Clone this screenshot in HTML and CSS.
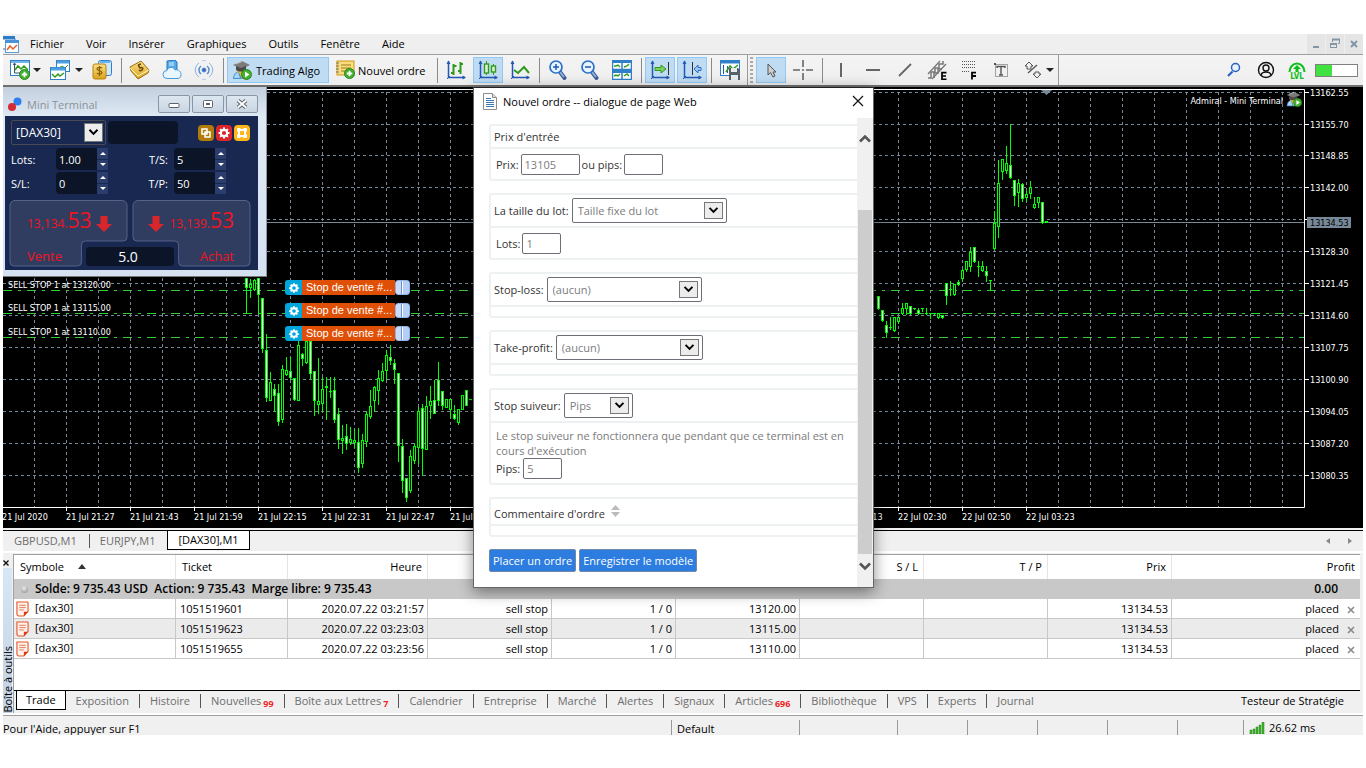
FILE: index.html
```html
<!DOCTYPE html>
<html lang="fr">
<head>
<meta charset="utf-8">
<title>Terminal de trading</title>
<link rel="stylesheet" href="styles.css">
</head>
<body>
<svg class="defs" aria-hidden="true">
  <defs>
    <linearGradient id="gold" x1="0" y1="0" x2="0" y2="1"><stop offset="0" stop-color="#fbe08a"/><stop offset="1" stop-color="#d9a21c"/></linearGradient>
    <symbol id="i-plus" viewBox="0 0 12 12"><circle cx="6" cy="6" r="5.5" fill="#3fae2c" stroke="#23831a"/><path d="M6 3v6M3 6h6" stroke="#fff" stroke-width="2"/></symbol>
    <symbol id="i-algo" viewBox="0 0 20 20">
      <path d="M1 19c0-5 3-8 8-8s7 3 7 8z" fill="#4493d8"/><path d="M2 18c0-3 2-5 4-6l2 6z" fill="#a9d4f5"/><circle cx="9" cy="9" r="4.500" fill="#d9a648"/><path d="M7 12l3 7 3-7z" fill="#e9bb3a"/>
      <path d="M1 5l9-4 8 4-8 4z" fill="#7b7b7b"/><path d="M4 6v4c3 2 7 2 10 0V6l-5 2z" fill="#4a4a4a"/><path d="M4 4l6-2.500" stroke="#c4c4c4"/>
      <circle cx="14.500" cy="14.500" r="5" fill="#44b02f" stroke="#2b861c"/><path d="M13 11.500v6l4.500-3z" fill="#fff"/>
    </symbol>
    <symbol id="i-axes" viewBox="0 0 20 20"><path d="M2.500 1v16.500H19" fill="none" stroke="#2257b5" stroke-width="1.500"/><path d="M.5 4l2-3.500 2 3.500zM16.500 15.500l3.500 2-3.500 2z" fill="#2257b5"/><path d="M1 19l3-3" stroke="#2257b5"/></symbol>
    <symbol id="i-lens" viewBox="0 0 20 20"><path d="M12 12l4.500 6" stroke="#3c5f95" stroke-width="4" stroke-linecap="round"/><path d="M12 12l4 5" stroke="#8fb1dc" stroke-width="2"/><circle cx="8" cy="7" r="6" fill="#e6f4ff" stroke="#2c6fc9" stroke-width="1.700"/></symbol>
    <symbol id="i-chev" viewBox="0 0 19 17"><path d="M5 5.500l4.500 4.500L14 5.500" fill="none" stroke="#000" stroke-width="2.200"/></symbol>
    <symbol id="i-gear" viewBox="0 0 16 16"><circle cx="8" cy="8" r="3.200" fill="none" stroke="#fff" stroke-width="2.200"/><path d="M8 2.500v2M8 11.500v2M2.500 8h2M11.500 8h2M4.100 4.100l1.500 1.500M10.400 10.400l1.500 1.500M4.100 11.900l1.500-1.500M10.400 5.600l1.500-1.500" stroke="#fff" stroke-width="2"/></symbol>
    <symbol id="i-doc" viewBox="0 0 14 16"><path d="M1 .5h11a1 1 0 011 1v9l-4.500 5H3a2 2 0 01-2-2z" fill="#fff2ec" stroke="#e3562c" stroke-width="1.200"/><path d="M8.500 15.500V11H13z" fill="#d93a10"/><path d="M3.500 4h7M3.500 6.500h7M3.500 9h5" stroke="#e3764f"/></symbol>
    <symbol id="i-fall" viewBox="0 0 16 16"><path d="M4.500 0h7v8H16l-8 8-8-8h4.500z" fill="#d9252c"/></symbol>
  </defs>
</svg>

<div class="app">
  <header class="menubar">
    <svg class="app-icon" width="17" height="18" viewBox="0 0 17 18"><rect x="-1" y="1" width="13" height="4" fill="#2d7cc9"/><rect x="-1" y="4" width="13" height="10" fill="#fff" stroke="#2d7cc9"/><rect x="2.500" y="5.500" width="13" height="12" fill="#fff" stroke="#5b9bd8"/><rect x="2" y="5" width="14" height="3" fill="#4a92d8"/><path d="M4 15l3-4 3 3 4-4" stroke="#e2602e" stroke-width="1.500" fill="none"/></svg>
    <nav class="menus">
      <button>Fichier</button><button>Voir</button><button>Insérer</button><button>Graphiques</button><button>Outils</button><button>Fenêtre</button><button>Aide</button>
    </nav>
    <div class="mdi">
      <button aria-label="Réduire"><svg width="12" height="12"><path d="M3 9h6" stroke="#8296a8" stroke-width="2"/></svg></button>
      <button aria-label="Restaurer"><svg width="12" height="12"><path d="M3.500 4V1.500h7v4H9" fill="none" stroke="#8296a8"/><path d="M3 1.500h8M1 6h7" stroke="#8296a8" stroke-width="2"/><rect x="1.500" y="5.500" width="6" height="4" fill="none" stroke="#8296a8"/></svg></button>
      <button aria-label="Fermer"><svg width="12" height="12"><path d="M3 3l6 6M9 3l-6 6" stroke="#8296a8" stroke-width="2"/></svg></button>
    </div>
  </header>

  <div class="toolbar">
    <button class="tool drop" aria-label="Nouveau graphique"><svg width="20" height="20" viewBox="0 0 20 20"><rect x=".5" y=".5" width="19" height="15" fill="#fff" stroke="#2f80c8"/><path d="M1 2h18" stroke="#6fb4ea" stroke-width="2"/><path d="M4.500 4v9H17M3 5l1.500-2L6 5" fill="none" stroke="#35526e"/><path d="M5 10l3-4 3 3 3-3 4 4" fill="none" stroke="#2f9a1c" stroke-width="1.500"/><use href="#i-plus" x="9" y="9" width="11" height="11"/></svg><i class="caret"></i></button>
    <button class="tool drop wide" aria-label="Profils"><svg width="20" height="20" viewBox="0 0 20 20"><rect x="6.500" y=".5" width="13" height="11" fill="#fff" stroke="#2f80c8"/><path d="M7 2h12" stroke="#4b9fe2" stroke-width="3"/><path d="M9 8l3-2 3 2 3-3" fill="none" stroke="#2f9a1c"/><rect x=".5" y="7.500" width="15" height="12" fill="#fff" stroke="#2f80c8"/><path d="M1 9h14" stroke="#4b9fe2" stroke-width="3"/><path d="M2 14l3 3 3-3 2 2 4-3" fill="none" stroke="#2f9a1c" stroke-width="1.500"/></svg><i class="caret"></i></button>
    <button class="tool" aria-label="Symboles"><svg width="20" height="20" viewBox="0 0 20 20"><rect x="6.500" y=".5" width="13" height="15" rx="2" fill="#cfe8fb" stroke="#2f80c8"/><path d="M8 2h10" stroke="#6ab3ec" stroke-width="2"/><rect x="1" y="4" width="13" height="15" rx="2" fill="url(#gold)" stroke="#b9820f"/><path d="M10 8c-1-1-5-1-5 1s5 1.500 5 3.500-4 2-5 .5M7.500 6v10" fill="none" stroke="#8d5f06" stroke-width="1.300"/></svg></button>
    <i class="sep"></i>
    <button class="tool" aria-label="Marché"><svg width="22" height="20" viewBox="0 0 22 20"><path d="M1 7l11-6 8 9-1 3-10 6-7-8z" fill="url(#gold)" stroke="#9b6f10"/><path d="M1 8l8 8 11-6" fill="none" stroke="#fff3c4"/><path d="M9 5l3-1M9 5l2 3c2-1 4 0 2 2-1 1-2 1-3 0" fill="none" stroke="#6b4a08" stroke-width="1.500"/></svg></button>
    <button class="tool" aria-label="Cloud"><svg width="20" height="20" viewBox="0 0 20 20"><path d="M5 1l8-1 2 2v11H5z" fill="#56a9e6" stroke="#2675bd"/><path d="M7 3h5M7 5h5" stroke="#d8efff"/><path d="M5 18.500a4 4 0 010-8c1-4 7-4 8-.5 4-1 6 2 6 4.500s-1 4-4 4z" fill="#e8f6ff" stroke="#4a9add"/></svg></button>
    <button class="tool" aria-label="Signaux"><svg width="20" height="20" viewBox="0 0 20 20" fill="none" stroke="#5b8fd0"><circle cx="10" cy="10" r="2" fill="#2c66c4"/><path d="M7 6a5 5 0 000 8M13 6a5 5 0 010 8" stroke-width="1.500"/><path d="M5 3a8.500 8.500 0 000 14M15 3a8.500 8.500 0 010 14" stroke="#8db3e2"/><path d="M8 .7a9.500 9.500 0 014 0M8 19.300a9.500 9.500 0 004 0" stroke="#b6cdec"/></svg></button>
    <i class="sep"></i>
    <button class="tool text on algo"><svg width="20" height="20"><use href="#i-algo"/></svg>Trading Algo</button>
    <button class="tool text order"><svg width="20" height="20" viewBox="0 0 20 20"><rect x="2" y="1" width="17" height="14" fill="#fbdc7a" stroke="#c9981e"/><path d="M1 3h3M1 6h3M1 9h3M1 12h3" stroke="#777"/><path d="M6 5h10M6 8h10M6 11h6" stroke="#9c7a23"/><use href="#i-plus" x="9" y="8" width="11" height="11"/></svg>Nouvel ordre</button>
    <i class="sep"></i>
    <button class="tool" aria-label="Barres"><svg width="20" height="20" viewBox="0 0 20 20"><use href="#i-axes"/><path d="M7.500 4v11M5 13h2M7.500 6h3M14.500 2v12M12 11h2M14.500 4H17" fill="none" stroke="#2f9a1c" stroke-width="2"/></svg></button>
    <button class="tool on" aria-label="Chandeliers"><svg width="20" height="20" viewBox="0 0 20 20"><use href="#i-axes"/><path d="M8.500 1v3M8.500 13v2M15.500 4v2M15.500 12v3" stroke="#2f9a1c"/><rect x="6.500" y="4" width="4" height="9" fill="#dff2d8" stroke="#2f9a1c" stroke-width="1.400"/><rect x="13.500" y="6" width="4" height="6" fill="#dff2d8" stroke="#2f9a1c" stroke-width="1.400"/></svg></button>
    <button class="tool" aria-label="Ligne"><svg width="20" height="20" viewBox="0 0 20 20"><use href="#i-axes"/><path d="M4 10l4 3 6-6 5 6" fill="none" stroke="#2f9a1c" stroke-width="2"/></svg></button>
    <i class="sep"></i>
    <button class="tool" aria-label="Zoom avant"><svg width="20" height="20" viewBox="0 0 20 20"><use href="#i-lens"/><path d="M8 4v6M5 7h6" stroke="#2257b5" stroke-width="1.500"/></svg></button>
    <button class="tool" aria-label="Zoom arrière"><svg width="20" height="20" viewBox="0 0 20 20"><use href="#i-lens"/><path d="M5 7h6" stroke="#2257b5" stroke-width="1.500"/></svg></button>
    <button class="tool" aria-label="Mosaïque"><svg width="20" height="20" viewBox="0 0 20 20"><path d="M.5.500h19v19H.5z" fill="#fff" stroke="#2f80c8"/><path d="M0 1.500h20M0 11.500h20" stroke="#2f80c8" stroke-width="3"/><path d="M10 0v20M0 9.500h20M.5 0v20M19.500 0v20M0 19.500h20" stroke="#2f80c8" stroke-width="1.500"/><path d="M2 6h2l2-1 2 2M12 7l3-1 2-2M2 16l2-1 2 1 2-2M12 16l3-2 2 2" fill="none" stroke="#2f9a1c" stroke-width="1.400"/></svg></button>
    <i class="sep"></i>
    <button class="tool on" aria-label="Défilement"><svg width="20" height="20" viewBox="0 0 20 20"><use href="#i-axes"/><path d="M18.500 2v13" stroke="#333"/><path d="M5 7.500h6V5l5 4-5 4v-2.500H5z" fill="#7fd05e" stroke="#2f9a1c"/></svg></button>
    <button class="tool on" aria-label="Décalage"><svg width="20" height="20" viewBox="0 0 20 20"><use href="#i-axes"/><path d="M10.500 2v13" stroke="#333"/><path d="M19 7.500h-3V5l-4 4 4 4v-2.500h3z" fill="#9fc6f3" stroke="#2c6fc9"/></svg></button>
    <i class="sep"></i>
    <button class="tool" aria-label="Modèles"><svg width="20" height="20" viewBox="0 0 20 20"><rect x=".5" y=".5" width="19" height="15" fill="#fff" stroke="#2f80c8"/><path d="M0 2h20" stroke="#2f80c8" stroke-width="3"/><path d="M3.500 5v9M7.500 6v7" stroke="#2257b5"/><path d="M6 12l4-6 3 3 5-4" fill="none" stroke="#2f9a1c" stroke-width="1.500"/><path d="M9 8h9l2 2v10H9z" fill="#57616b"/><path d="M11 8h6v4h-6zM11 15h7v5h-7z" fill="#e8ecef"/></svg></button>
    <i class="edge"></i><i class="grip"></i>
    <button class="tool on" aria-label="Curseur"><svg width="20" height="20" viewBox="0 0 20 20"><path d="M7 4v11l2.500-2.500L12 17l2-1-2-4h3z" fill="#cfcfcf" stroke="#555"/></svg></button>
    <button class="tool" aria-label="Réticule"><svg width="20" height="20" viewBox="0 0 20 20"><path d="M10 0v7M10 13v7M0 10h7M13 10h7M9 10h2" stroke="#666" stroke-width="1.600"/></svg></button>
    <i class="sep"></i>
    <button class="tool" aria-label="Ligne verticale"><svg width="20" height="20"><path d="M10 3v14" stroke="#666" stroke-width="2"/></svg></button>
    <button class="tool" aria-label="Ligne horizontale"><svg width="20" height="20"><path d="M3 10h14" stroke="#666" stroke-width="2"/></svg></button>
    <button class="tool" aria-label="Ligne de tendance"><svg width="20" height="20"><path d="M4 16L16 4" stroke="#666" stroke-width="1.800"/></svg></button>
    <button class="tool" aria-label="Canal"><svg width="20" height="20" viewBox="0 0 20 20"><path d="M1 14L13 1M5 19L19 4" stroke="#777" stroke-width="1.300"/><path d="M1 18h3v-6h4V8h4V4h4V1M7 18v-5h4V9h4" fill="none" stroke="#777" stroke-width="1.500"/><path d="M19.500 12.700H15v6.600h4.500M15 16h4" fill="none" stroke="#000" stroke-width="1.700"/></svg></button>
    <button class="tool" aria-label="Fibonacci"><svg width="20" height="20" viewBox="0 0 20 20"><path d="M3 1.500h14M3 4.500h14M3 7.500h14M3 11.500h8" stroke="#555" stroke-dasharray="1 1"/><path d="M17 12.700h-4v6.800M13 16h4" fill="none" stroke="#000" stroke-width="1.800"/></svg></button>
    <button class="tool" aria-label="Texte"><svg width="20" height="20" viewBox="0 0 20 20"><rect x="4.500" y="4.500" width="12" height="12" fill="none" stroke="#555" stroke-dasharray="1 1"/><path d="M6 8V6.500h8V8M10 6.500V15M8 15h4" fill="none" stroke="#555" stroke-width="1.400"/><path d="M3 3h2v2H3z" fill="#555"/></svg></button>
    <button class="tool drop" aria-label="Objets"><svg width="20" height="20" viewBox="0 0 20 20" fill="none" stroke="#555"><path d="M5 13L14 5" stroke-width="1.400"/><path d="M6 2l4 4H8v3H4V6H2z"/><path d="M14 18l4-4h-2v-2h-4v2h-2z"/></svg><i class="caret"></i></button>
    <i class="edge"></i>
    <div class="tools-right">
      <button aria-label="Rechercher"><svg width="16" height="16" viewBox="0 0 16 16"><path d="M6.500 9.500L2 14" stroke="#2a5fc4" stroke-width="2.200"/><circle cx="9.500" cy="5.500" r="4" fill="#eaf2ff" stroke="#2a5fc4" stroke-width="1.500"/></svg></button>
      <button aria-label="Compte"><svg width="18" height="18" viewBox="0 0 18 18" fill="none" stroke="#111" stroke-width="1.400"><circle cx="9" cy="9" r="7.500"/><circle cx="9" cy="7" r="3"/><path d="M4 14c1-4 9-4 10 0"/></svg></button>
      <span class="lvl"><svg width="18" height="12" viewBox="0 0 18 12"><path d="M1.500 11a7.500 8.500 0 0115 0" fill="none" stroke="#0fbf1b" stroke-width="2"/><path d="M9 4l4 4h-2.500v3h-3V8H5z" fill="#0fbf1b"/></svg><b>LVL</b></span>
      <span class="level-bar"><i></i></span>
    </div>
  </div>

  <main class="workspace">
    <svg class="chart" id="chart" viewBox="3 87 1360 441" role="img" aria-label="[DAX30],M1"></svg>

    <section class="mini" aria-label="Mini Terminal">
      <div class="mini-title">
        <svg width="14" height="14" viewBox="0 0 14 14"><circle cx="9.500" cy="4.500" r="4" fill="#2f7ff0"/><circle cx="4" cy="10" r="4" fill="#d42c34"/></svg>
        <span>Mini Terminal</span>
        <button aria-label="Réduire"><svg width="12" height="10"><rect x="1" y="4.500" width="10" height="4" rx="1" fill="#fff" stroke="#5a6470"/></svg></button>
        <button aria-label="Agrandir"><svg width="12" height="10"><rect x="1.500" y="1.500" width="9" height="7" rx="1" fill="#fff" stroke="#5a6470"/><rect x="4.500" y="4.500" width="3" height="1" fill="none" stroke="#5a6470"/></svg></button>
        <button aria-label="Fermer"><svg width="12" height="10"><path d="M2 1.500l8 7M10 1.500l-8 7" stroke="#5a6470" stroke-width="4"/><path d="M2 1.500l8 7M10 1.500l-8 7" stroke="#fff" stroke-width="2"/></svg></button>
      </div>
      <div class="mini-body">
        <div class="mini-top">
          <span class="pick dark"><select aria-label="Symbole"><option>[DAX30]</option></select><svg width="19" height="19"><use href="#i-chev"/></svg></span>
          <span class="blank"></span>
          <button class="ico brown" aria-label="Copier"><svg width="16" height="16" fill="none" stroke="#fff" stroke-width="1.500"><rect x="4" y="4" width="5" height="5"/><rect x="7" y="7" width="5" height="5"/></svg></button>
          <button class="ico red" aria-label="Réglages"><svg width="16" height="16"><use href="#i-gear"/></svg></button>
          <button class="ico amber" aria-label="Disposition"><svg width="16" height="16" fill="none" stroke="#fff" stroke-width="2"><rect x="5" y="5" width="6" height="6"/><path d="M3 5h2M11 5h2M3 11h2M11 11h2M5 3v2M11 3v2M5 11v2M11 11v2" stroke-width="3"/></svg></button>
        </div>
        <div class="mini-grid">
          <label for="lots">Lots:</label><span class="spin"><input id="lots" value="1.00"><span><button aria-label="Plus"><i class="up"></i></button><button aria-label="Moins"><i class="down"></i></button></span></span>
          <label for="ts" class="second">T/S:</label><span class="spin"><input id="ts" value="5"><span><button aria-label="Plus"><i class="up"></i></button><button aria-label="Moins"><i class="down"></i></button></span></span>
          <label for="sl">S/L:</label><span class="spin"><input id="sl" value="0"><span><button aria-label="Plus"><i class="up"></i></button><button aria-label="Moins"><i class="down"></i></button></span></span>
          <label for="tp" class="second">T/P:</label><span class="spin"><input id="tp" value="50"><span><button aria-label="Plus"><i class="up"></i></button><button aria-label="Moins"><i class="down"></i></button></span></span>
        </div>
        <div class="deal">
          <svg class="deal-bg" viewBox="0 0 244 67" preserveAspectRatio="none"><g fill="#303d61" stroke="#55648a"><path d="M5 .5h109a5 5 0 015 5V37a4 4 0 01-4 4H77a4 4 0 00-4 4v17a4 4 0 01-4 4H5a4 4 0 01-4-4V5a5 5 0 014-4.500z"/><path d="M239 .5H130a5 5 0 00-5 5V37a4 4 0 004 4h38a4 4 0 014 4v17a4 4 0 004 4h64a4 4 0 004-4V5a5 5 0 00-4-4.500z"/></g></svg>
          <button class="side"><span class="quote">13,134.<b>53</b><svg width="16" height="16"><use href="#i-fall"/></svg></span><span class="act">Vente</span></button>
          <button class="side buy"><span class="quote"><svg width="16" height="16"><use href="#i-fall"/></svg>13,139.<b>53</b></span><span class="act">Achat</span></button>
          <output class="spread">5.0</output>
        </div>
      </div>
    </section>

    <div class="chips">
      <div class="chip"><button aria-label="Réglages"><svg width="14" height="14"><use href="#i-gear"/></svg></button><span>Stop de vente #...</span><i></i></div>
      <div class="chip"><button aria-label="Réglages"><svg width="14" height="14"><use href="#i-gear"/></svg></button><span>Stop de vente #...</span><i></i></div>
      <div class="chip"><button aria-label="Réglages"><svg width="14" height="14"><use href="#i-gear"/></svg></button><span>Stop de vente #...</span><i></i></div>
    </div>

    <section class="dialog" role="dialog" aria-label="Nouvel ordre">
      <div class="dialog-title">
        <svg width="14" height="17" viewBox="0 0 14 17"><path d="M.5.500h9l4 4v12H.5z" fill="#fff" stroke="#8c8c8c"/><path d="M9.500.500v4h4" fill="#ddd" stroke="#8c8c8c"/><path d="M3 5.500h5M3 7.500h8M3 9.500h8M3 11.500h8M3 13.500h8" stroke="#3d78b4"/></svg>
        <span>Nouvel ordre -- dialogue de page Web</span>
        <button aria-label="Fermer"><svg width="12" height="12"><path d="M1 1l10 10M11 1L1 11" stroke="#111" stroke-width="1.200"/></svg></button>
      </div>
      <div class="dialog-main">
        <form class="form" onsubmit="return false">
          <fieldset><div class="head short">Prix d'entrée</div><div class="row"><label for="prix">Prix:</label><input id="prix" class="w-l" value="13105"><label for="oupips">ou pips:</label><input id="oupips" class="w-s"></div></fieldset>
          <fieldset><div class="head"><label for="taille">La taille du lot:</label><span class="pick p155"><select id="taille"><option>Taille fixe du lot</option></select><svg width="19" height="17"><use href="#i-chev"/></svg></span></div><div class="row"><label for="flots">Lots:</label><input id="flots" class="w-s" value="1"></div></fieldset>
          <fieldset><div class="head"><label for="fsl">Stop-loss:</label><span class="pick p155"><select id="fsl"><option>(aucun)</option></select><svg width="19" height="17"><use href="#i-chev"/></svg></span></div><div class="void"></div></fieldset>
          <fieldset><div class="head"><label for="ftp">Take-profit:</label><span class="pick p147"><select id="ftp"><option>(aucun)</option></select><svg width="19" height="17"><use href="#i-chev"/></svg></span></div><div class="void"></div></fieldset>
          <fieldset><div class="head"><label for="fss">Stop suiveur:</label><span class="pick p69"><select id="fss"><option>Pips</option></select><svg width="19" height="17"><use href="#i-chev"/></svg></span></div><div class="trail"><p>Le stop suiveur ne fonctionnera que pendant que ce terminal est en cours d'exécution</p><div class="line"><label for="fpips">Pips:</label><input id="fpips" class="w-s" value="5"></div></div></fieldset>
          <fieldset><div class="head mid">Commentaire d'ordre<svg width="9" height="12"><path d="M4.500 0L9 5H0zM4.500 12L9 7H0z" fill="#bbb"/></svg></div><div class="void"></div></fieldset>
          <div class="actions"><button class="primary">Placer un ordre</button><button class="primary">Enregistrer le modèle</button></div>
        </form>
        <div class="scroll" aria-hidden="true">
          <svg width="12" height="12"><path d="M1 8.500l5-5 5 5" fill="none" stroke="#555" stroke-width="2.600"/></svg>
          <i></i>
          <svg width="12" height="12"><path d="M1 3.500l5 5 5-5" fill="none" stroke="#555" stroke-width="2.600"/></svg>
        </div>
      </div>
    </section>
  </main>

  <nav class="chart-tabs">
    <button>GBPUSD,M1</button><button>EURJPY,M1</button><button class="active">[DAX30],M1</button>
    <span class="arrows"><svg width="4" height="6"><path d="M4 0v6L0 3z" fill="#888"/></svg><svg width="4" height="6"><path d="M0 0v6l4-3z" fill="#888"/></svg></span>
  </nav>

  <section class="toolbox">
    <aside class="rail"><button aria-label="Fermer"><svg width="6" height="6"><path d="M.5.500l5 5M5.500.500l-5 5" stroke="#111" stroke-width="1.400"/></svg></button><div><span>Boîte à outils</span></div></aside>
    <div class="panel">
      <table class="orders">
        <colgroup><col><col class="c112"><col class="c140"><col class="c124"><col class="c124"><col class="c124"><col class="c124"><col class="c124"><col class="c124"><col class="c188"></colgroup>
        <thead><tr><th class="l">Symbole<i class="sort"></i></th><th class="l">Ticket</th><th>Heure</th><th></th><th></th><th></th><th>S / L</th><th>T / P</th><th>Prix</th><th>Profit</th></tr></thead>
        <tbody>
          <tr class="total"><td colspan="9" class="l"><i class="dot"></i>Solde: 9 735.43 USD&nbsp; Action: 9 735.43&nbsp; Marge libre: 9 735.43</td><td>0.00</td></tr>
          <tr><td class="l"><svg width="13" height="16"><use href="#i-doc"/></svg>[dax30]</td><td class="l">1051519601</td><td>2020.07.22 03:21:57</td><td>sell stop</td><td>1 / 0</td><td>13120.00</td><td></td><td></td><td>13134.53</td><td>placed<button aria-label="Supprimer"><svg width="8" height="8"><path d="M1 1l6 6M7 1L1 7" stroke="#8a8a8a" stroke-width="1.600"/></svg></button></td></tr>
          <tr class="alt"><td class="l"><svg width="13" height="16"><use href="#i-doc"/></svg>[dax30]</td><td class="l">1051519623</td><td>2020.07.22 03:23:03</td><td>sell stop</td><td>1 / 0</td><td>13115.00</td><td></td><td></td><td>13134.53</td><td>placed<button aria-label="Supprimer"><svg width="8" height="8"><path d="M1 1l6 6M7 1L1 7" stroke="#8a8a8a" stroke-width="1.600"/></svg></button></td></tr>
          <tr><td class="l"><svg width="13" height="16"><use href="#i-doc"/></svg>[dax30]</td><td class="l">1051519655</td><td>2020.07.22 03:23:56</td><td>sell stop</td><td>1 / 0</td><td>13110.00</td><td></td><td></td><td>13134.53</td><td>placed<button aria-label="Supprimer"><svg width="8" height="8"><path d="M1 1l6 6M7 1L1 7" stroke="#8a8a8a" stroke-width="1.600"/></svg></button></td></tr>
        </tbody>
      </table>
      <nav class="box-tabs">
        <button class="active">Trade</button><button>Exposition</button><button>Histoire</button><button>Nouvelles<b>99</b></button><button>Boîte aux Lettres<b>7</b></button><button>Calendrier</button><button>Entreprise</button><button>Marché</button><button>Alertes</button><button>Signaux</button><button>Articles<b>696</b></button><button>Bibliothèque</button><button>VPS</button><button>Experts</button><button>Journal</button>
        <button class="tester">Testeur de Stratégie</button>
      </nav>
    </div>
  </section>

  <footer class="status">
    <span class="help">Pour l'Aide, appuyer sur F1</span><span class="s128">Default</span><span class="s98"></span><span class="s70"></span><span class="s70"></span><span class="s70"></span><span class="s70"></span><span class="s66"></span>
    <span class="ping"><svg width="16" height="12"><path d="M1 8h2v4H1zM4 7h2v5H4zM7 5h2v7H7zM10 3h2v9h-2zM13 0h2v12h-2z" fill="#3fb52a" stroke="#23851a" stroke-width=".5"/></svg>26.62 ms</span>
  </footer>
</div>
<script src="chart.js"></script>
</body>
</html>
```
FILE: styles.css
```css
* { box-sizing: border-box; }
body { margin: 0; padding: 34px 3px 33px; min-height: 100vh; background: #fff; color: #000; font: 11px/15px "Open Sans", "Noto Sans", sans-serif; overflow-x: hidden; }
button, input, select { font: inherit; color: inherit; margin: 0; padding: 0; border: 0; background: none; border-radius: 0; outline: 0; }
svg { display: block; flex: none; }
.defs { position: absolute; width: 0; height: 0; }
.app { display: flex; flex-direction: column; background: #f0f0f0; min-width: 1200px; overflow: hidden; }

.menubar { display: flex; height: 21px; align-items: center; background: #efefef; border-bottom: 1px solid #a0a0a0; }
.menus { display: flex; gap: 22px; margin-left: 10px; padding-bottom: 2px; flex: 1; }
.mdi { display: flex; background: #efefef; align-self: stretch; gap: 1px; }
.mdi button { width: 18px; display: grid; place-items: center; background: #e5e5e5; }

.toolbar { display: flex; align-items: center; gap: 2px; height: 32px; padding-left: 2px; background: linear-gradient(#f4f4f4, #eee); border-bottom: 2px solid #707070; }
.tool { width: 30px; height: 26px; display: flex; align-items: center; justify-content: center; border: 1px solid transparent; flex: none; }
.tool.on { background: #c0dcf3; border-color: #90c8f6; }
.tool.drop { width: 38px; justify-content: flex-start; padding-left: 4px; gap: 3px; }
.tool.drop.wide { width: 40px; gap: 5px; }
.tool.text { width: 102px; justify-content: flex-start; padding-left: 4px; gap: 4px; white-space: nowrap; }
.tool.order { padding-left: 3px; gap: 3px; }
.caret { border: 4px solid transparent; border-top-color: #222; border-bottom: 0; }
.sep { width: 1px; height: 25px; margin: 0 1px 0 2px; background: #8a8a8a; flex: none; }
.edge { width: 1px; align-self: stretch; background: #9a9a9a; flex: none; }
.grip { width: 3px; height: 26px; margin: 0 1px 0 0; background: repeating-linear-gradient(#aaa 0 2px, transparent 2px 4px); flex: none; }
.tools-right { display: flex; align-items: center; margin-left: auto; gap: 15px; padding-right: 5px; }
.lvl { display: flex; flex-direction: column; align-items: center; color: #0fbf1b; margin-left: -2px; }
.lvl b { font: bold 8px/7px "DejaVu Sans Condensed", sans-serif; }
.level-bar { width: 43px; height: 13px; border: 1px solid #808080; background: #fff; margin-left: -6px; }
.level-bar i { display: block; width: 40%; height: 100%; background: #41e141; }

.workspace { position: relative; z-index: 1; background: #000; }
.chart { width: 100%; height: auto; font: 9px "DejaVu Sans Condensed", sans-serif; }

.mini { position: absolute; left: 0; top: 0; width: 264px; padding: 0 8px 6px 2px; background: linear-gradient(#c3cfde, #dfeaf5 30px, #d5e1f1); border-right: 1px solid #8d98a5; border-bottom: 1px solid #777; }
.mini-title { display: flex; height: 29px; align-items: center; padding: 5px 0 0 3px; gap: 2px; color: #8b9199; }
.mini-title span { flex: 1; margin-left: 3px; }
.mini-title button { width: 32px; height: 18px; display: grid; place-items: center; border: 1px solid #8a96a5; border-radius: 2px; background: linear-gradient(#dde7f1, #c9d5e2); }
.mini-body { background: #182850; padding: 4px 7px 3px 4px; color: #fff; }
.mini-top { display: flex; align-items: center; gap: 2px; padding-left: 2px; }
.blank { width: 70px; height: 23px; margin: 0 18px 0 0; background: #0c1428; border-radius: 4px; }
.ico { width: 16px; height: 16px; border-radius: 4px; }
.brown { background: #b07b08; } .red { background: #d9252c; } .amber { background: #ffb61a; }
.mini-grid { display: grid; grid-template-columns: 45px 52px 66px 52px; gap: 2px 0; margin-top: 3px; padding-left: 2px; align-items: center; }
.second { text-align: right; padding-right: 6px; }
.spin { display: flex; height: 22px; }
.spin input { width: 41px; background: #0c1428; border-radius: 4px 0 0 4px; padding-left: 3px; }
.spin > span { display: grid; gap: 1px; width: 11px; }
.spin button { background: #2a3d6c; display: grid; place-items: center; }
.up, .down { border: 3px solid transparent; border-bottom-color: #fff; border-top: 0; }
.down { border-top: 3px solid #fff; border-bottom: 0; }
.deal { position: relative; display: flex; justify-content: space-between; height: 67px; margin-top: 6px; color: #f0141e; }
.deal-bg { position: absolute; inset: 0; width: 100%; height: 100%; }
.side { position: relative; width: 119px; padding: 7px 0 4px 18px; display: flex; flex-direction: column; align-items: flex-start; justify-content: space-between; color: #f0141e; }
.buy { align-items: flex-end; padding: 7px 17px 4px 0; }
.quote { display: flex; align-items: baseline; font-size: 12px; line-height: 26px; }
.quote b { font-weight: normal; font-size: 21px; line-height: 26px; }
.quote svg { align-self: center; margin: 4px 5px 0 4px; }
.quote b + svg { margin-right: 0; }
.act { font-size: 13px; line-height: 14px; }
.spread { position: absolute; left: 77px; right: 77px; bottom: 1px; height: 19px; background: #0c1428; border-radius: 4px; color: #fff; font-size: 14px; line-height: 19px; text-align: center; padding-right: 4px; }

.chips { position: absolute; left: 282px; top: 193px; display: grid; gap: 8px; }
.chip { display: flex; width: 125px; height: 15px; font: 11px/15px "Liberation Sans", Arial, sans-serif; color: #fff; }
.chip button { width: 17px; background: #00a5dc; display: grid; place-items: center; border-radius: 3px 0 0 3px; }
.chip span { flex: 1; background: #e04f06; padding-left: 4px; white-space: nowrap; }
.chip i { width: 15px; border-radius: 3px; border: 1px solid #8fb4ea; background: linear-gradient(90deg, #c9dcfb 5px, #6d8fc4 5px 6px, #fff 6px 7px, #b4cef8 7px); }

.dialog { position: absolute; left: 470px; top: 0; width: 401px; background: #fff; border: 1px solid #666; border-top-color: #222; box-shadow: 0 4px 14px rgba(0, 0, 0, .45); }
.dialog-title { display: flex; align-items: center; height: 30px; padding: 0 9px 4px; gap: 6px; }
.dialog-title span { flex: 1; }
.dialog-main { display: flex; }
.form { flex: 1; min-width: 0; padding: 6px 0 15px 15px; color: #333; }
fieldset { margin: 0 0 12px; padding: 0; min-width: 0; border: 2px solid #edf1f1; border-right: 0; border-radius: 3px 0 0 3px; }
.head { display: flex; align-items: center; gap: 3px; height: 33px; padding-left: 3px; border-bottom: 2px solid #edf1f1; }
.head.short { height: 23px; }
.head.mid { height: 27px; gap: 6px; padding-top: 4px; }
.head.mid svg { margin-bottom: 6px; }
.row { display: flex; align-items: center; gap: 2px; height: 30px; padding-left: 5px; }
.void { height: 9px; }
.form input { height: 21px; border: 1px solid #6e6e78; border-radius: 2px; padding-left: 3px; color: #7b7b80; }
.form .w-l { width: 59px; }
.form .w-s { width: 39px; }
.trail { padding: 5px 5px 4px; }
.trail p { margin: 0; color: #7b7b7b; }
.line { display: flex; gap: 3px; align-items: center; }
.pick { display: inline-grid; align-items: center; height: 25px; border: 1px solid #6e6e78; border-radius: 2px; }
.pick > * { grid-area: 1 / 1; }
.pick select { appearance: none; width: 100%; height: 100%; padding-left: 5px; color: #7b7b80; }
.pick svg { justify-self: end; margin-right: 3px; background: #ececec; border: 1px solid #777; pointer-events: none; }
.p155 { width: 155px; } .p147 { width: 147px; } .p69 { width: 69px; }
.pick.dark { width: 95px; border-color: #4a4a50; }
.pick.dark svg { margin-right: 2px; }
.pick.dark select { color: #fff; padding-left: 4px; font-size: 12px; }
.actions { display: flex; gap: 3px; }
.primary { height: 23px; padding: 0 3px; background: #2d7de0; border: 1px solid #6f87a8; border-radius: 2px; color: #fff; white-space: nowrap; }
.scroll { width: 16px; background: #f0f0f0; display: flex; flex-direction: column; align-items: center; padding: 15px 0; }
.scroll i { width: 14px; flex: 1; margin: 65px 0 6px; background: #cdcdcd; }

.chart-tabs { display: flex; height: 23px; margin-top: 2px; border-top: 1px solid #000; border-bottom: 2px solid #fff; padding-left: 2px; align-items: center; color: #6d6d6d; }
.chart-tabs button { padding: 0 12px 0 9px; border-right: 1px solid #555; line-height: 14px; }
.chart-tabs button:nth-child(2) { padding: 0 12px 0 10px; border: 0; }
.chart-tabs .active { align-self: stretch; padding: 0 10px; background: #fff; color: #000; border: 1px solid #000; border-top: 0; margin-bottom: 1px; }
.arrows { margin-left: auto; display: flex; gap: 18px; padding-right: 11px; }

.toolbox { display: flex; margin-top: 1px; padding-right: 3px; border-bottom: 2px solid #fff; }
.rail { width: 10px; display: flex; flex-direction: column; flex: none; }
.rail button { height: 14px; padding-top: 3px; }
.rail div { flex: 1; width: 9px; background: linear-gradient(#d8e6f5, #c2d2e4); display: flex; align-items: flex-end; }
.rail span { writing-mode: vertical-rl; transform: rotate(180deg); line-height: 9px; white-space: nowrap; }
.panel { flex: 1; min-width: 0; border-left: 1px solid #a0a0a0; border-top: 1px solid #a0a0a0; background: #fff; }
.orders { width: 100%; table-layout: fixed; border-collapse: separate; border-spacing: 0; margin-bottom: 31px; }
.orders th, .orders td { padding: 0 3px 0 4px; text-align: right; font-weight: normal; border-right: 1px solid #c8c8c8; border-bottom: 1px solid #c8c8c8; white-space: nowrap; }
.orders th { height: 24px; padding: 0 5px 2px 6px; border-color: #e4e4e4; border-bottom: 0; }
.orders td { height: 20px; }
.orders .l { text-align: left; }
.orders th:last-child, .orders td:last-child { border-right: 0; }
.orders td svg { display: inline-block; vertical-align: middle; margin: -2px 6px 0 -2px; }
.orders td button svg { margin: 0; }
.orders td button { margin: 0 2px 0 8px; }
.orders .alt td { background: #ebebeb; }
.orders .total td { background: #c8c8c8; font-size: 12px; font-weight: 600; border-right: 0; }
.orders .total td:last-child { padding-right: 22px; }
.dot { display: inline-block; width: 7px; height: 7px; border-radius: 50%; background: radial-gradient(circle at 3px 2px, #eee, #888); margin: 0 7px 0 3px; }
.sort { display: inline-block; border: 4px solid transparent; border-bottom: 5px solid #333; border-top: 0; margin: 0 0 2px 14px; }
.c112 { width: 112px; } .c124 { width: 124px; } .c140 { width: 140px; } .c188 { width: 188px; }
.box-tabs { display: flex; align-items: center; height: 23px; padding: 0 0 3px 2px; border-top: 1px solid #000; background: #f0f0f0; color: #6d6d6d; white-space: nowrap; }
.box-tabs button { padding: 0 10px; height: 14px; line-height: 14px; border-right: 1px solid #555; display: flex; align-items: center; }
.box-tabs .active { height: 19px; align-self: flex-start; padding: 0 9px; background: #fff; color: #000; border: 1px solid #000; border-top: 0; }
.box-tabs button:nth-last-child(-n+2) { border-right: 0; }
.box-tabs b { font-size: 9px; color: #f01e28; margin: 6px 0 0 2px; line-height: 12px; }
.box-tabs .tester { margin-left: auto; color: #000; padding-right: 16px; }

.status { display: flex; height: 20px; border-top: 1px solid #a0a0a0; padding-top: 4px; overflow: hidden; }
.status span { border-left: 1px solid #999; padding-left: 5px; line-height: 18px; white-space: nowrap; }
.status .help { flex: 1; border: 0; padding: 0; }
.s128 { width: 128px; } .s98 { width: 98px; } .s70 { width: 70px; } .s66 { width: 66px; }
.status .ping { width: 120px; display: flex; align-items: center; gap: 4px; }
```
FILE: chart.js
```js
// Candle: [x, high, low, body top, body bottom, 1 when the body is filled]
const candles = [
  [246,278,313,278,287,1],[250,279,297,284,287,0],[254,279,290,280,289,0],[258,278,313,278,294,1],[262,298,352,298,348,1],
  [266,334,401,350,397,1],[270,372,400,382,400,0],[274,384,411,389,395,1],[278,384,425,393,421,1],[282,365,422,369,419,0],
  [286,357,375,370,374,0],[290,357,379,371,377,1],[294,378,400,378,399,1],[298,341,400,345,400,0],[302,353,365,354,358,1],
  [306,341,363,341,362,0],[310,341,378,341,373,1],[314,371,415,371,400,1],[318,358,413,401,404,0],[322,377,411,389,403,0],
  [326,377,419,386,387,0],[330,377,397,391,391,0],[334,377,422,390,419,1],[338,408,448,414,439,1],[342,425,453,438,440,0],
  [346,424,449,436,443,1],[350,427,444,439,442,0],[354,429,447,440,442,0],[358,428,472,442,467,1],[362,434,467,440,463,0],
  [366,411,446,414,441,0],[370,390,418,406,416,0],[374,386,411,387,400,0],[378,370,404,378,390,0],[382,363,381,371,380,0],
  [386,350,379,355,370,0],[390,345,364,357,360,1],[394,359,383,363,369,1],[398,373,461,373,445,1],[402,439,492,446,480,1],
  [406,478,501,478,497,1],[410,450,492,456,490,0],[414,443,463,446,460,0],[418,407,463,411,447,0],[422,404,475,408,448,1],
  [426,396,449,406,449,0],[430,386,418,401,405,0],[434,380,413,400,413,1],[438,362,405,380,400,1],[442,391,409,391,405,1],
  [446,399,407,399,407,0],[450,399,417,399,409,0],[454,405,419,414,418,1],[458,409,424,409,422,0],[462,395,409,395,409,0],
  [466,390,405,390,405,1],[470,399,399,399,399,0],
  [878,296,309,296,308,1],[882,310,321,310,320,1],[886,321,337,325,332,1],[890,317,329,327,327,0],[894,317,331,317,330,0],
  [898,317,323,317,321,0],[902,303,314,308,313,0],[906,303,314,303,308,0],[910,306,314,306,313,1],[914,308,309,308,308,0],
  [918,308,314,310,313,1],[922,308,311,308,308,0],[926,308,314,313,313,0],[930,313,318,313,313,0],[934,313,314,313,313,0],
  [938,313,318,313,317,0],[942,315,318,315,317,1],[946,283,304,283,295,1],[950,281,295,289,289,0],[954,284,295,284,294,0],
  [958,280,285,282,284,1],[962,269,281,270,278,0],[966,261,271,261,269,0],[970,247,271,252,266,0],[974,247,262,247,261,1],
  [978,261,276,266,266,0],[982,261,271,266,270,0],[986,266,281,271,275,1],[990,280,290,280,280,0],[994,211,249,223,248,0],
  [998,160,237,183,226,0],[1002,159,179,159,171,0],[1006,146,173,163,170,0],[1010,124,178,165,177,1],[1014,180,205,180,195,1],
  [1018,179,206,183,192,0],[1022,183,201,184,198,1],[1026,191,201,194,197,0],[1030,181,198,187,193,0],[1034,197,208,204,207,0],
  [1038,197,207,197,202,0],[1042,202,223,202,222,1],[1046,221,222,221,222,0]
];
const prices = [['13162.55',92],['13155.70',124],['13148.85',155],['13142.00',187],['',219],['13128.30',251],['13121.45',283],
  ['13114.60',315],['13107.75',347],['13100.90',379],['13094.05',411],['13087.20',443],['13080.35',475]];
const times = [['21 Jul 2020',2],['21 Jul 21:27',66],['21 Jul 21:43',130],['21 Jul 21:59',194],['21 Jul 22:15',258],['21 Jul 22:31',322],
  ['21 Jul 22:47',386],['21 Jul 23:03',450],['22 Jul 02:13',834],['22 Jul 02:30',898],['22 Jul 02:50',962],['22 Jul 03:23',1026]];
const orders = [['13120.00',290],['13115.00',313],['13110.00',337]];

const out = [];
const path = (d, attrs) => out.push(`<path d="${d}" fill="none" ${attrs}/>`);
const text = (x, y, s, fill = '#fff') => out.push(`<text x="${x}" y="${y}" fill="${fill}">${s}</text>`);

let grid = '';
for (let x = 34; x < 1304; x += 32) grid += `M${x + .5} 92V507`;
prices.forEach(p => { grid += `M3 ${p[1] + .5}H1304`; });
path(grid, 'stroke="#778899" stroke-dasharray="3 3"');
path(orders.map(o => `M3 ${o[1] + .5}H1304`).join(''), 'stroke="#32cd32" stroke-dasharray="9 6 3 6"');
path('M3 222.500H1304', 'stroke="#778899"');

candles.forEach(([x, hi, lo, top, bottom, full]) => {
  path(`M${x + .5} ${hi}V${lo + 1}`, 'stroke="#0f0"');
  out.push(`<rect x="${x - .5}" y="${top + .5}" width="2" height="${Math.max(bottom - top, .1)}" fill="${full ? '#fff' : '#000'}" stroke="#0f0"/>`);
});

let ticks = 'M3 89.500H1304.500V507.500H3';
times.forEach(t => { ticks += `M${t[1] + .5} 508V511`; text(t[1], 520, t[0]); });
prices.forEach(p => { ticks += `M1305 ${p[1] + .5}H1309`; if (p[0]) text(1310, p[1] + 4, p[0]); });
path(ticks, 'stroke="#fff"');
orders.forEach(o => text(8, o[1] - 2, `SELL STOP 1 at ${o[0]}`));
out.push('<path d="M1041 90h11l-5.500 5z" fill="#778899"/><rect x="1307" y="217" width="44" height="11" fill="#778899"/>');
text(1310, 226, '13134.53', '#000');
out.push('<text x="1283" y="104" text-anchor="end" fill="#fff">Admiral - Mini Terminal</text><use href="#i-algo" x="1286" y="91" width="16" height="16"/>');
document.getElementById('chart').innerHTML = out.join('');
```
